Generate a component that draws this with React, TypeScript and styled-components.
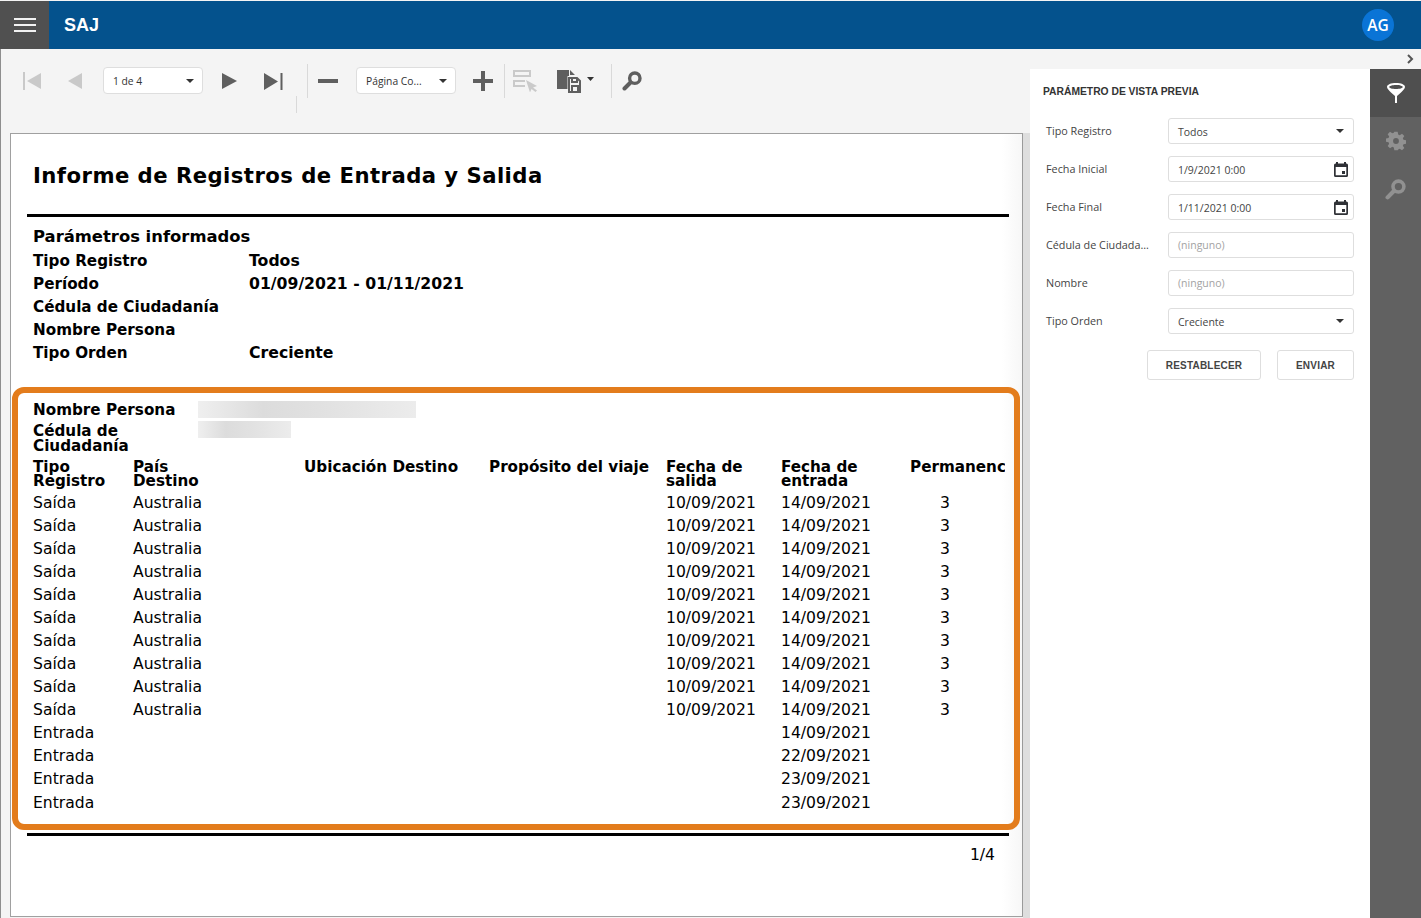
import React, { FC } from "react";
import styled, { createGlobalStyle } from "styled-components";

const GlobalStyle = createGlobalStyle`
  html, body {
    margin: 0;
    padding: 0;
    height: 100%;
    overflow: hidden;
    background: #f4f4f4;
  }
  * { box-sizing: border-box; }
`;

const uiFont = `"Open Sans", "Noto Sans", sans-serif`;
const reportFont = `"DejaVu Sans", sans-serif`;
const titleFont = `"Liberation Sans", Arial, sans-serif`;

const Shell = styled.div`
  width: 1421px;
  height: 918px;
  display: flex;
  flex-direction: column;
  overflow: hidden;
`;

const Header = styled.header`
  height: 48px;
  margin-top: 1px;
  flex: none;
  display: flex;
  align-items: center;
  background: #04528d;
  color: #fff;
`;

const MenuButton = styled.div`
  width: 49px;
  height: 48px;
  background: #505050;
  display: flex;
  flex-direction: column;
  justify-content: center;
  gap: 4px;
  padding: 0 13px 0 14px;
`;

const MenuLine = styled.span`
  height: 2px;
  background: #f2f2f2;
`;

const Brand = styled.div`
  margin-left: 15px;
  font: 700 18px ${titleFont};
  flex: 1;
`;

const Avatar = styled.div`
  width: 32px;
  height: 32px;
  margin-right: 27px;
  border-radius: 50%;
  background: #0a74d6;
  display: flex;
  align-items: center;
  justify-content: center;
  font: 600 15.5px ${uiFont};
`;

const Body = styled.div`
  flex: 1;
  min-height: 0;
  display: flex;
`;

const Viewer = styled.main`
  width: 1030px;
  flex: none;
  display: flex;
  flex-direction: column;
  background: #f4f4f4;
  border-left: 1px solid #8e8e8e;
`;

const Toolbar = styled.div`
  height: 84px;
  flex: none;
  position: relative;
  display: flex;
  align-items: flex-start;
  padding-top: 15px;
`;

const ToolIcon = styled.div<{ $left: number; $width: number }>`
  margin-left: ${(p) => p.$left}px;
  width: ${(p) => p.$width}px;
  height: 34px;
  flex: none;
  display: flex;
  align-items: center;
  justify-content: center;
`;

const Separator = styled.div<{ $left: number }>`
  margin-left: ${(p) => p.$left}px;
  width: 1px;
  height: 34px;
  flex: none;
  background: #d9d9d9;
`;

const StraySeparator = styled.div`
  position: absolute;
  left: 295px;
  top: 47px;
  width: 1px;
  height: 17px;
  background: #d9d9d9;
`;

const ToolSelect = styled.div<{ $left: number }>`
  margin-left: ${(p) => p.$left}px;
  margin-top: 3px;
  width: 100px;
  height: 27px;
  flex: none;
  display: flex;
  align-items: center;
  justify-content: space-between;
  padding: 0 8px 0 9px;
  background: #fff;
  border: 1px solid #dedede;
  border-radius: 4px;
  font: 10.3px ${uiFont};
  color: #333;
`;

const Caret = styled.span`
  width: 0;
  height: 0;
  border-left: 4px solid transparent;
  border-right: 4px solid transparent;
  border-top: 4px solid #333;
`;

const PageArea = styled.div`
  flex: 1;
  min-height: 0;
  display: flex;
  padding-left: 9px;
`;

const Page = styled.section`
  width: 1013px;
  height: 784px;
  flex: none;
  background: linear-gradient(90deg, #fff 98%, #f7f7f7 100%);
  border: 1px solid #a0a0a0;
  border-right-color: #9a9a9a;
  font-family: ${reportFont};
  color: #000;
  display: flex;
  flex-direction: column;
`;

const ScrollTrack = styled.div`
  width: 7px;
  flex: none;
  background: #dedede;
`;

const ReportTitle = styled.h1`
  margin: 27px 0 0 22px;
  font: 700 21.2px/30px ${reportFont};
  letter-spacing: 0.45px;
`;

const Rule = styled.div<{ $top: number }>`
  margin: ${(p) => p.$top}px 0 0 16px;
  width: 982px;
  height: 3px;
  background: #000;
  flex: none;
`;

const ParamsBlock = styled.div`
  margin: 8px 0 0 22px;
  display: grid;
  grid-template-columns: 216px 1fr;
  grid-template-rows: 24px;
  grid-auto-rows: 23px;
  align-items: center;
  font: 700 15.2px ${reportFont};
`;

const ParamsHeading = styled.div`
  grid-column: 1 / 3;
  font-size: 16.4px;
  padding-bottom: 2px;
`;

const ParamValue = styled.div`
  font-size: 15.7px;
`;

const Highlight = styled.div`
  margin: 23px 0 0 1px;
  width: 1008px;
  height: 443px;
  flex: none;
  border: 6px solid #e37c1c;
  border-radius: 12px;
  padding: 8px 10px 0 15px;
  overflow: hidden;
`;

const PersonRow = styled.div`
  display: grid;
  grid-template-columns: 165px 1fr;
  font: 700 15.2px/15px ${reportFont};
  margin-bottom: 3px;
`;

const PersonLabel = styled.div<{ $top: number }>`
  padding-top: ${(p) => p.$top}px;
`;

const Blurred = styled.div<{ $width: number }>`
  width: ${(p) => p.$width}px;
  height: 17px;
  background: linear-gradient(90deg, #efefef, #dcdcdc 30%, #e2e2e2 60%, #ececec);
`;

const TableRow = styled.div`
  display: grid;
  grid-template-columns: 100px 171px 185px 177px 115px 129px 95px;
  font-size: 15.6px;
  line-height: 23.08px;
  white-space: nowrap;
`;

const HeadRow = styled(TableRow)`
  font: 700 15.2px/14px ${reportFont};
  white-space: normal;
  margin: 6px 0 3.5px;
`;

const HeadCell = styled.div<{ $clip?: boolean; $narrow?: boolean }>`
  ${(p) => (p.$clip ? "white-space: nowrap; overflow: hidden;" : "")}
  ${(p) => (p.$narrow ? "max-width: 84px;" : "")}
`;

const CenterCell = styled.div`
  padding-left: 30px;
`;

const PageNumber = styled.div`
  margin: 9px 27px 0 0;
  text-align: right;
  font-size: 15.6px;
  line-height: 20px;
`;

const SidePanel = styled.aside`
  flex: 1;
  min-width: 0;
  display: flex;
  flex-direction: column;
`;

const CollapseStrip = styled.div`
  height: 20px;
  flex: none;
  display: flex;
  align-items: center;
  justify-content: flex-end;
  padding-right: 7px;
  background: #f4f4f4;
`;

const PanelBody = styled.div`
  flex: 1;
  display: flex;
  min-height: 0;
`;

const ParamsPanel = styled.div`
  width: 340px;
  flex: none;
  background: #fff;
  padding: 17px 16px 0 13px;
`;

const PanelTitle = styled.h2`
  margin: 0 0 20px;
  font: 700 10.3px/12px ${titleFont};
  color: #333;
`;

const FormRow = styled.div`
  height: 26px;
  margin-bottom: 12px;
  display: flex;
  align-items: center;
  padding-left: 3px;
`;

const FieldLabel = styled.label`
  width: 122px;
  flex: none;
  font: 10.8px ${uiFont};
  color: #444;
  margin-top: -2px;
  white-space: nowrap;
`;

const Field = styled.div<{ $muted?: boolean }>`
  flex: 1;
  height: 26px;
  display: flex;
  align-items: center;
  justify-content: space-between;
  padding: 0 5px 0 9px;
  border: 1px solid #dedede;
  border-radius: 3px;
  font: 10.5px ${uiFont};
  color: ${(p) => (p.$muted ? "#a3a3a3" : "#444")};
`;

const FieldText = styled.span`
  padding-top: 2px;
`;

const CaretSlot = styled.span`
  display: flex;
  padding-right: 4px;
`;

const ButtonRow = styled.div`
  display: flex;
  justify-content: flex-end;
  gap: 16px;
  margin-top: 16px;
`;

const ActionButton = styled.button<{ $width: number }>`
  width: ${(p) => p.$width}px;
  height: 30px;
  padding: 0;
  background: #fff;
  border: 1px solid #dedede;
  border-radius: 3px;
  font: 700 10px ${titleFont};
  letter-spacing: 0.2px;
  color: #444;
`;

const TabRail = styled.nav`
  flex: 1;
  background: #616161;
`;

const Tab = styled.div<{ $active?: boolean }>`
  height: 48px;
  display: flex;
  align-items: center;
  justify-content: center;
  background: ${(p) => (p.$active ? "#4f4f4f" : "transparent")};
`;

const Search: FC<{ size: number; color: string }> = ({ size, color }) => (
  <svg width={size} height={size} viewBox="0 0 20 20">
    <circle cx="12.8" cy="7.2" r="5.2" fill="none" stroke={color} strokeWidth="3.4" />
    <path d="M8.5 11.5 L2.5 17.5" stroke={color} strokeWidth="4" strokeLinecap="round" />
  </svg>
);

const Gear: FC = () => (
  <svg width="20" height="20" viewBox="0 0 24 24">
    <path
      fill="#919191"
      fillRule="evenodd"
      d="M10 1h4l.6 3.2 1.9.8 2.7-1.8 2.8 2.8-1.8 2.7.8 1.9 3 .6v4l-3 .6-.8 1.900 1.8 2.700-2.800 2.800-2.700-1.800-1.900.8L14 23h-4l-.6-3.200-1.900-.8-2.700 1.800L2 18l1.800-2.700-.8-1.900-3-.6V9l3-.6.8-1.900L2 3.800 4.800 1l2.700 1.800 1.900-.8zM12 8.500a3.500 3.500 0 1 0 0 7 3.500 3.500 0 0 0 0-7z"
    />
  </svg>
);

const Calendar: FC = () => (
  <svg width="14" height="15" viewBox="0 0 14 15">
    <path
      fill="#2f3136"
      fillRule="evenodd"
      d="M2 0h2v1.500h6V0h2v1.500h.5A1.500 1.500 0 0 1 14 3v10.500a1.500 1.500 0 0 1-1.500 1.500h-11A1.500 1.500 0 0 1 0 13.500V3a1.500 1.500 0 0 1 1.500-1.500H2zM1.700 5v8.300h10.600V5zM8 9h3v3H8z"
    />
  </svg>
);

const records = [
  ...Array.from({ length: 10 }, () => ({
    tipo: "Saída",
    pais: "Australia",
    salida: "10/09/2021",
    entrada: "14/09/2021",
    dias: "3",
  })),
  ...["14/09/2021", "22/09/2021", "23/09/2021", "23/09/2021"].map((entrada) => ({
    tipo: "Entrada",
    pais: "",
    salida: "",
    entrada,
    dias: "",
  })),
];

const params: [string, string][] = [
  ["Tipo Registro", "Todos"],
  ["Período", "01/09/2021 - 01/11/2021"],
  ["Cédula de Ciudadanía", ""],
  ["Nombre Persona", ""],
  ["Tipo Orden", "Creciente"],
];

const App: FC = () => (
  <Shell>
    <GlobalStyle />
    <Header>
      <MenuButton>
        <MenuLine />
        <MenuLine />
        <MenuLine />
      </MenuButton>
      <Brand>SAJ</Brand>
      <Avatar>AG</Avatar>
    </Header>
    <Body>
      <Viewer>
        <Toolbar>
          <ToolIcon $left={21} $width={20}>
            <svg width="19" height="18" viewBox="0 0 19 18">
              <path fill="#c9c9c9" d="M0 0h2v18H0zM4 9 18 1v16z" />
            </svg>
          </ToolIcon>
          <ToolIcon $left={25} $width={16}>
            <svg width="15" height="16" viewBox="0 0 15 16">
              <path fill="#c9c9c9" d="M0 8 14 0v16z" />
            </svg>
          </ToolIcon>
          <ToolSelect $left={20}>
            1 de 4
            <Caret />
          </ToolSelect>
          <ToolIcon $left={18} $width={16}>
            <svg width="15" height="16" viewBox="0 0 15 16">
              <path fill="#5f5f5f" d="M15 8 0 0v16z" />
            </svg>
          </ToolIcon>
          <ToolIcon $left={27} $width={19}>
            <svg width="19" height="17" viewBox="0 0 19 17">
              <path fill="#5f5f5f" d="M14 8.500 0 0v17zM16.500 0h2v17h-2z" />
            </svg>
          </ToolIcon>
          <Separator $left={24} />
          <ToolIcon $left={10} $width={20}>
            <svg width="20" height="4" viewBox="0 0 20 4">
              <path fill="#5f5f5f" d="M0 0h20v4H0z" />
            </svg>
          </ToolIcon>
          <ToolSelect $left={18}>
            Página Co...
            <Caret />
          </ToolSelect>
          <ToolIcon $left={17} $width={20}>
            <svg width="20" height="20" viewBox="0 0 20 20">
              <path fill="#5f5f5f" d="M8 0h4v8h8v4h-8v8H8v-8H0V8h8z" />
            </svg>
          </ToolIcon>
          <Separator $left={11} />
          <ToolIcon $left={8} $width={26}>
            <svg width="26" height="22" viewBox="0 0 26 22">
              <path
                fill="none"
                stroke="#cacaca"
                strokeWidth="2"
                d="M1 1h16v5H1zM12 11H1v5h11"
              />
              <path fill="#cacaca" d="M13 10l11 6-4 1.500 4 3-1.500 1.500-4-3-1.500 3.500z" />
            </svg>
          </ToolIcon>
          <ToolIcon $left={18} $width={39}>
            <svg width="39" height="26" viewBox="0 0 39 26">
              <path fill="#5f5f5f" d="M0 2h12v6h-1.500v13H0zM13 2l5 5h-5z" />
              <path
                fill="none"
                stroke="#5f5f5f"
                strokeWidth="2"
                d="M12 10h8l3 3v11H12zM15 10v4h5v-4M15 24v-6h6v6"
              />
              <path fill="#333" d="M30 9h7l-3.500 4z" />
            </svg>
          </ToolIcon>
          <Separator $left={15} />
          <ToolIcon $left={10} $width={20}>
            <Search size={20} color="#5f5f5f" />
          </ToolIcon>
          <StraySeparator />
        </Toolbar>
        <PageArea>
          <Page>
            <ReportTitle>Informe de Registros de Entrada y Salida</ReportTitle>
            <Rule $top={23} />
            <ParamsBlock>
              <ParamsHeading>Parámetros informados</ParamsHeading>
              {params.map(([label, value]) => (
                <React.Fragment key={label}>
                  <div>{label}</div>
                  <ParamValue>{value}</ParamValue>
                </React.Fragment>
              ))}
            </ParamsBlock>
            <Highlight>
              <PersonRow>
                <PersonLabel $top={2}>Nombre Persona</PersonLabel>
                <Blurred $width={218} />
              </PersonRow>
              <PersonRow>
                <PersonLabel $top={3}>Cédula de Ciudadanía</PersonLabel>
                <Blurred $width={93} />
              </PersonRow>
              <HeadRow>
                <HeadCell $narrow>Tipo Registro</HeadCell>
                <HeadCell $narrow>País Destino</HeadCell>
                <HeadCell>Ubicación Destino</HeadCell>
                <HeadCell>Propósito del viaje</HeadCell>
                <HeadCell $narrow>Fecha de salida</HeadCell>
                <HeadCell $narrow>Fecha de entrada</HeadCell>
                <HeadCell $clip>Permanencia</HeadCell>
              </HeadRow>
              {records.map((r, i) => (
                <TableRow key={i}>
                  <div>{r.tipo}</div>
                  <div>{r.pais}</div>
                  <div />
                  <div />
                  <div>{r.salida}</div>
                  <div>{r.entrada}</div>
                  <CenterCell>{r.dias}</CenterCell>
                </TableRow>
              ))}
            </Highlight>
            <Rule $top={3} />
            <PageNumber>1/4</PageNumber>
          </Page>
          <ScrollTrack />
        </PageArea>
      </Viewer>
      <SidePanel>
        <CollapseStrip>
          <svg width="7" height="10" viewBox="0 0 7 10">
            <path d="M1 1l4 4-4 4" fill="none" stroke="#555" strokeWidth="2" />
          </svg>
        </CollapseStrip>
        <PanelBody>
          <ParamsPanel>
            <PanelTitle>PARÁMETRO DE VISTA PREVIA</PanelTitle>
            <FormRow>
              <FieldLabel>Tipo Registro</FieldLabel>
              <Field>
                <FieldText>Todos</FieldText>
                <CaretSlot>
                  <Caret />
                </CaretSlot>
              </Field>
            </FormRow>
            <FormRow>
              <FieldLabel>Fecha Inicial</FieldLabel>
              <Field>
                <FieldText>1/9/2021 0:00</FieldText>
                <Calendar />
              </Field>
            </FormRow>
            <FormRow>
              <FieldLabel>Fecha Final</FieldLabel>
              <Field>
                <FieldText>1/11/2021 0:00</FieldText>
                <Calendar />
              </Field>
            </FormRow>
            <FormRow>
              <FieldLabel>Cédula de Ciudada...</FieldLabel>
              <Field $muted>(ninguno)</Field>
            </FormRow>
            <FormRow>
              <FieldLabel>Nombre</FieldLabel>
              <Field $muted>(ninguno)</Field>
            </FormRow>
            <FormRow>
              <FieldLabel>Tipo Orden</FieldLabel>
              <Field>
                <FieldText>Creciente</FieldText>
                <CaretSlot>
                  <Caret />
                </CaretSlot>
              </Field>
            </FormRow>
            <ButtonRow>
              <ActionButton $width={114}>RESTABLECER</ActionButton>
              <ActionButton $width={77}>ENVIAR</ActionButton>
            </ButtonRow>
          </ParamsPanel>
          <TabRail>
            <Tab $active>
              <svg width="20" height="22" viewBox="0 0 20 22">
                <path
                  fill="#fff"
                  fillRule="evenodd"
                  d="M10 1c5 0 9 1.500 9 4 0 1.500-2 3.500-4 5.500l-4 3.500V21H9v-7L5 10.500C3 8.500 1 6.500 1 5c0-2.500 4-4 9-4zm0 2C6 3 3.200 4 3.200 5S6 7 10 7s6.800-1 6.800-2S14 3 10 3z"
                />
              </svg>
            </Tab>
            <Tab>
              <Gear />
            </Tab>
            <Tab>
              <Search size={21} color="#919191" />
            </Tab>
          </TabRail>
        </PanelBody>
      </SidePanel>
    </Body>
  </Shell>
);

export default App;
